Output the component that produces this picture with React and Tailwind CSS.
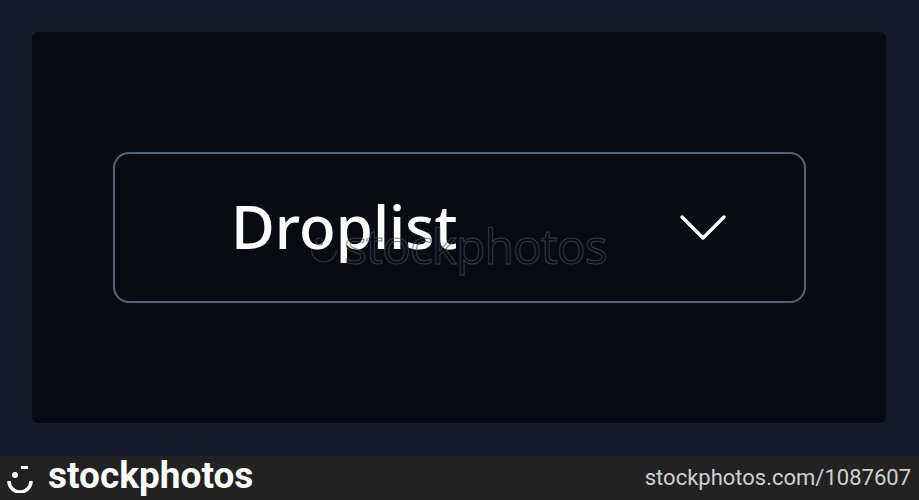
import React from 'react';

// Small smile mark used in the footer logo
const SmileMark = () => (
  <svg width="30" height="30" viewBox="0 0 30 30" fill="none">
    <rect x="15" y="3" width="7" height="3" fill="#fff" />
    <circle cx="9" cy="12" r="3" fill="#fff" />
    <path d="M3 18 a11 11 0 0 0 22 0" stroke="#fff" strokeWidth="3.5" fill="none" />
  </svg>
);

const Chevron = () => (
  <svg width="48" height="28" viewBox="0 0 48 28" fill="none">
    <polyline points="3,3 24,24 45,3" stroke="#fff" strokeWidth="3.4" strokeLinecap="round" strokeLinejoin="round" />
  </svg>
);

export default function App() {
  return (
    <div className="w-[919px] h-[500px] flex flex-col bg-[#161a2d] overflow-hidden">
      <div className="h-[456px] p-[32px] pb-[33px] pr-[33px]">
        <div className="relative h-full rounded-[6px] bg-[#080b12] flex items-center pl-[81px] pr-[80px]">
          <div className="w-full h-[151px] rounded-[16px] border-[2.5px] border-[#59627a] flex items-center justify-between pl-[116px] pr-[77px]">
            <span
              className="text-white text-[60px] font-medium leading-none pb-[3px]"
              style={{ fontFamily: '"Noto Sans", sans-serif' }}
            >
              Droplist
            </span>
            <Chevron />
          </div>
          {/* faint watermark across the panel */}
          <div className="absolute left-[276px] top-[190px] flex items-center gap-[2px] opacity-70 pointer-events-none">
            <svg width="34" height="34" viewBox="0 0 30 30" fill="none">
              <path d="M3 18 a11 11 0 0 0 22 0" stroke="#3a3f4a" strokeWidth="1.2" fill="none" />
              <circle cx="10" cy="11" r="3" stroke="#3a3f4a" strokeWidth="1.2" />
            </svg>
            <span
              className="text-[48px] leading-none text-transparent [-webkit-text-stroke:1px_#4a4f5a] tracking-[-1px]"
              style={{ fontFamily: '"Open Sans", sans-serif' }}
            >
              stockphotos
            </span>
          </div>
        </div>
      </div>
      <div className="flex-1 bg-[#222222] flex items-center justify-between pl-[6px] pr-[8px]">
        <div className="flex items-center gap-[12px]">
          <SmileMark />
          <span
            className="text-white text-[37px] font-bold leading-none tracking-[0px] pb-[6px]"
            style={{ fontFamily: 'Roboto, sans-serif' }}
          >
            stockphotos
          </span>
        </div>
        <span
          className="text-[#d0d0d0] text-[22px] leading-none"
          style={{ fontFamily: 'Roboto, sans-serif' }}
        >
          stockphotos.com/1087607
        </span>
      </div>
    </div>
  );
}
